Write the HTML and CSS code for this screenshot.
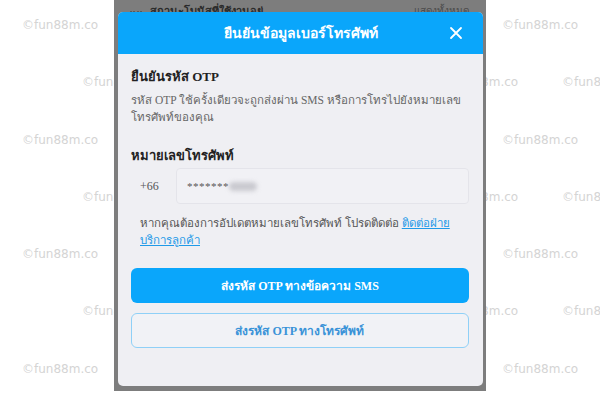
FILE: index.html
```html
<!DOCTYPE html>
<html lang="th">
<head>
  <meta charset="UTF-8" />
  <meta name="viewport" content="width=device-width, initial-scale=1.0"/>
  <title>ยืนยันข้อมูลเบอร์โทรศัพท์</title>
  <link rel="stylesheet" href="styles.css">
</head>
<body>
  <div class="watermark">
    <div class="wm-row"><span>©fun88m.co</span><span>©fun88m.co</span><span>©fun88m.co</span><span>©fun88m.co</span><span>©fun88m.co</span></div>
    <div class="wm-row shift"><span>©fun88m.co</span><span>©fun88m.co</span><span>©fun88m.co</span><span>©fun88m.co</span><span>©fun88m.co</span></div>
    <div class="wm-row"><span>©fun88m.co</span><span>©fun88m.co</span><span>©fun88m.co</span><span>©fun88m.co</span><span>©fun88m.co</span></div>
    <div class="wm-row shift"><span>©fun88m.co</span><span>©fun88m.co</span><span>©fun88m.co</span><span>©fun88m.co</span><span>©fun88m.co</span></div>
    <div class="wm-row"><span>©fun88m.co</span><span>©fun88m.co</span><span>©fun88m.co</span><span>©fun88m.co</span><span>©fun88m.co</span></div>
    <div class="wm-row shift"><span>©fun88m.co</span><span>©fun88m.co</span><span>©fun88m.co</span><span>©fun88m.co</span><span>©fun88m.co</span></div>
    <div class="wm-row"><span>©fun88m.co</span><span>©fun88m.co</span><span>©fun88m.co</span><span>©fun88m.co</span><span>©fun88m.co</span></div>
  </div>

  <div class="frame">
    <div class="under">
      <span class="under-icon"></span>
      <span class="under-title">สถานะโบนัสที่ใช้งานอยู่</span>
      <span class="under-link">แสดงทั้งหมด</span>
    </div>

    <div class="modal">
      <div class="modal-head">
        <h1>ยืนยันข้อมูลเบอร์โทรศัพท์</h1>
        <svg class="close" width="14" height="14" viewBox="0 0 14 14">
          <path d="M2 2 L12 12 M12 2 L2 12" stroke="#fff" stroke-width="1.8" stroke-linecap="round"/>
        </svg>
      </div>

      <div class="modal-body">
        <h2>ยืนยันรหัส OTP</h2>
        <p class="desc">รหัส OTP ใช้ครั้งเดียวจะถูกส่งผ่าน SMS หรือการโทรไปยังหมายเลข โทรศัพท์ของคุณ</p>

        <h3>หมายเลขโทรศัพท์</h3>
        <div class="phone">
          <span class="code">+66</span>
          <div class="field">
            <span class="stars">*******</span>
            <span class="blur"></span>
          </div>
        </div>

        <p class="hint">หากคุณต้องการอัปเดตหมายเลขโทรศัพท์ โปรดติดต่อ <a href="#">ติดต่อฝ่ายบริการลูกค้า</a></p>

        <button class="btn primary">ส่งรหัส OTP ทางข้อความ SMS</button>
        <button class="btn outline">ส่งรหัส OTP ทางโทรศัพท์</button>
      </div>
    </div>
  </div>
</body>
</html>
```

FILE: styles.css
```css
body {
  margin: 0;
  width: 600px;
  height: 400px;
  background: #fff;
  font-family: "Liberation Serif", "Noto Sans", serif;
  position: relative;
  overflow: hidden;
}

/* watermark tiles behind the screenshot */
.watermark {
  position: absolute;
  top: 0;
  left: 0;
  width: 600px;
  height: 400px;
  overflow: hidden;
  padding-top: 18px;
  box-sizing: border-box;
  font-family: "DejaVu Sans", sans-serif;
  font-size: 12px;
  color: #d4d4d4;
  z-index: 0;
}
.wm-row {
  display: flex;
  height: 57.3px;
  padding-left: 22px;
  white-space: nowrap;
}
.wm-row.shift {
  padding-left: 82px;
}
.wm-row span {
  flex: 0 0 120px;
}

.frame {
  position: relative;
  z-index: 1;
  width: 372px;
  height: 391px;
  box-sizing: border-box;
  margin: 0 auto 0 114px;
  background: #7d7d7d;
  padding: 0 3px 5px 4px;
  display: flex;
  flex-direction: column;
}

.under {
  height: 12px;
  overflow: hidden;
  display: flex;
  align-items: flex-end;
  gap: 8px;
  padding: 0 14px 0 12px;
  font-size: 11px;
  line-height: 12px;
}
.under > span {
  transform: translateY(5px);
}
.under-icon {
  width: 12px;
  height: 4px;
  border-top: 2px dotted #5a5a5a;
}
.under-title {
  font-weight: bold;
  color: #2b2b2b;
}
.under-link {
  margin-left: auto;
  color: #4a4a4a;
  font-size: 10px;
}

.modal {
  flex: 1;
  background: #efeff3;
  border-radius: 5px;
  overflow: hidden;
  display: flex;
  flex-direction: column;
}

.modal-head {
  height: 42px;
  background: #0aa6fb;
  display: flex;
  align-items: center;
  justify-content: center;
  position: relative;
}
.modal-head h1 {
  margin: 0;
  color: #fff;
  font-size: 14px;
  font-weight: bold;
}
.close {
  position: absolute;
  right: 20px;
  top: 14px;
}

.modal-body {
  padding: 14px 14px 0 13px;
  color: #333;
}
.modal-body h2 {
  margin: 0;
  font-size: 13px;
  line-height: 18px;
  color: #222;
}
.desc {
  margin: 6px 0 0;
  font-size: 11.5px;
  line-height: 17px;
  color: #666;
}
.modal-body h3 {
  margin: 21px 0 0;
  font-size: 13px;
  line-height: 18px;
  color: #222;
}

.phone {
  display: flex;
  align-items: center;
  margin-top: 3px;
  height: 36px;
}
.code {
  width: 45px;
  padding-left: 9px;
  box-sizing: border-box;
  font-size: 12px;
  color: #555;
}
.field {
  flex: 1;
  height: 36px;
  box-sizing: border-box;
  border: 1px solid #e4e4ea;
  border-radius: 4px;
  background: #f1f1f5;
  display: flex;
  align-items: center;
  padding-left: 10px;
}
.stars {
  font-size: 11px;
  color: #555;
  letter-spacing: 0.5px;
}
.blur {
  width: 28px;
  height: 9px;
  border-radius: 5px;
  background: #c9c9cf;
  filter: blur(2px);
}

.hint {
  margin: 11px 0 0;
  padding-left: 9px;
  font-size: 11.5px;
  line-height: 17px;
  color: #555;
}
.hint a {
  color: #1f9ae8;
}

.btn {
  display: block;
  width: 100%;
  height: 35px;
  border-radius: 6px;
  font-family: inherit;
  font-size: 12px;
  font-weight: bold;
  cursor: pointer;
}
.primary {
  margin-top: 19px;
  background: #0aa6fb;
  border: none;
  color: #fff;
}
.outline {
  margin-top: 10px;
  background: #f1f2f6;
  border: 1px solid #8fd0f7;
  color: #3a93d8;
}
```
